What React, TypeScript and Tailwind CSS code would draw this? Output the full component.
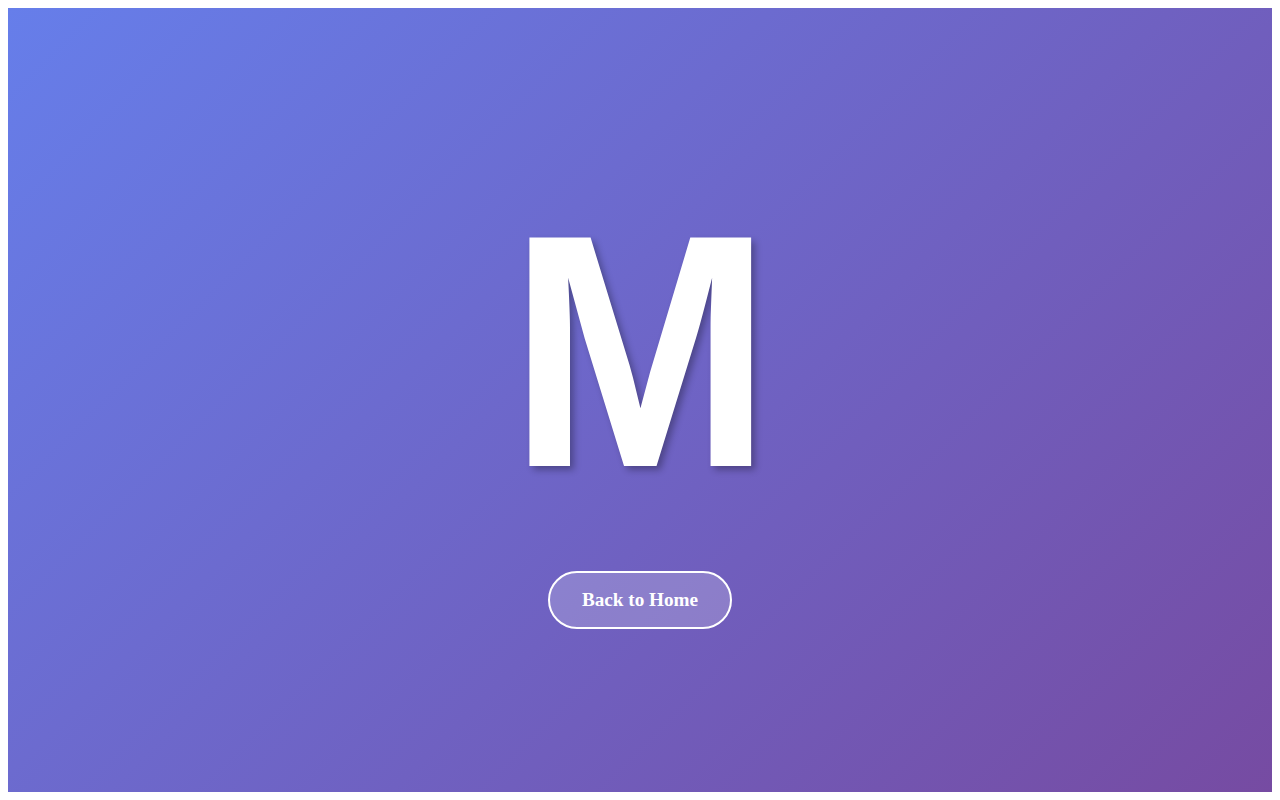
import React from "react";

export default function App() {
  return (
    <div className="bg-white p-2">
      <div className="flex h-[784px] flex-col items-center justify-center bg-[linear-gradient(135deg,#667eea_0%,#764ba2_100%)]">
        <h1 className="m-0 mb-10 scale-x-[0.955] text-[332px] font-bold leading-[360px] text-white [font-family:'Liberation_Sans',Arial,sans-serif] [text-shadow:4px_4px_8px_rgba(0,0,0,0.3)]">
          M
        </h1>
        <button className="cursor-pointer rounded-[50px] border-2 border-white bg-[rgba(255,255,255,0.2)] px-8 py-4 text-[19.2px] font-bold leading-[normal] text-white [font-family:'Liberation_Serif','Times_New_Roman',serif]">
          Back to Home
        </button>
      </div>
    </div>
  );
}
